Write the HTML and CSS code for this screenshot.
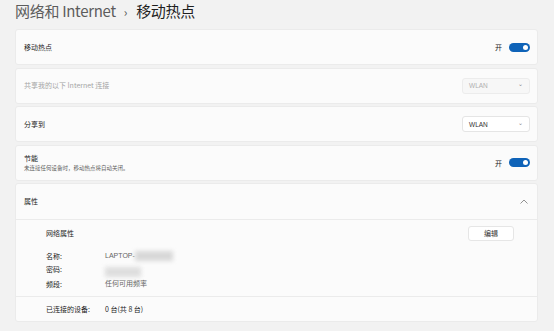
FILE: index.html
```html
<!DOCTYPE html>
<html lang="zh-cn">
<head>
    <meta charset="UTF-8">
    <meta name="viewport" content="width=device-width, initial-scale=1.0">
    <title>移动热点</title>
    <link rel="stylesheet" href="styles.css">
</head>
<body>
    <div class="page">
        <h1 class="title"><span class="crumb">网络和 Internet</span><span class="sep">›</span>移动热点</h1>

        <div class="card row">
            <span class="label">移动热点</span>
            <div class="toggle-wrap">
                <span class="state">开</span>
                <span class="toggle"></span>
            </div>
        </div>

        <div class="card row">
            <span class="label muted">共享我的以下 Internet 连接</span>
            <div class="select off">WLAN <span class="chev">⌄</span></div>
        </div>

        <div class="card row">
            <span class="label">分享到</span>
            <div class="select">WLAN <span class="chev">⌄</span></div>
        </div>

        <div class="card row">
            <div>
                <div class="label">节能</div>
                <div class="sub">未连接任何设备时，移动热点将自动关闭。</div>
            </div>
            <div class="toggle-wrap">
                <span class="state">开</span>
                <span class="toggle"></span>
            </div>
        </div>

        <div class="card props">
            <div class="props-head">
                <span class="label">属性</span>
                <svg class="up" width="8" height="5" viewBox="0 0 8 5"><path d="M0.5 4.5 L4 1 L7.5 4.5" fill="none" stroke="#777" stroke-width="0.8"/></svg>
            </div>
            <div class="props-body">
                <div class="props-top">
                    <span>网络属性</span>
                    <button class="edit">编辑</button>
                </div>
                <div class="kv">
                    <span class="k">名称:</span>
                    <span class="v">LAPTOP-<span class="blur wide"></span></span>
                    <span class="k">密码:</span>
                    <span class="v"><span class="blur short"></span></span>
                    <span class="k">频段:</span>
                    <span class="v">任何可用频率</span>
                </div>
            </div>
            <div class="props-foot">
                <span class="k2">已连接的设备:</span>
                <span>0 台(共 8 台)</span>
            </div>
        </div>
    </div>
</body>
</html>
```

FILE: styles.css
```css
body {
    margin: 0;
    background: #f2f2f2;
    font-family: "Noto Sans CJK SC", "Noto Sans", sans-serif;
    color: #1b1b1b;
}

.page {
    padding: 0 16px 0 15px;
}

.title {
    margin: 0;
    height: 29px;
    font-size: 15px;
    font-weight: 400;
    line-height: 22px;
    color: #1f1f1f;
    letter-spacing: -0.3px;
}

.title .crumb {
    color: #5c5c5c;
}

.title .sep {
    font-size: 12px;
    margin: 0 9px 0 8px;
    color: #555;
}

.card {
    background: #fbfbfb;
    border: 1px solid #ebebeb;
    border-radius: 3px;
    margin-bottom: 2.5px;
    box-sizing: border-box;
}

.row {
    display: flex;
    align-items: center;
    justify-content: space-between;
    padding: 0 7px 0 8px;
    height: 36px;
}

.label {
    font-size: 7px;
    line-height: 9px;
}

.label.muted {
    color: #a5a5a5;
}

.sub {
    margin-top: 2px;
    font-size: 5.5px;
    line-height: 7px;
    color: #5d5d5d;
}

.toggle-wrap {
    display: flex;
    align-items: center;
    gap: 7px;
}

.state {
    font-size: 7px;
}

.toggle {
    position: relative;
    width: 21px;
    height: 9px;
    border-radius: 5px;
    background: #0f63b8;
}

.toggle::after {
    content: "";
    position: absolute;
    right: 2px;
    top: 2px;
    width: 5px;
    height: 5px;
    border-radius: 50%;
    background: #fff;
}

.select {
    display: flex;
    justify-content: space-between;
    align-items: center;
    width: 68px;
    height: 16px;
    box-sizing: border-box;
    padding: 0 6px;
    font-family: "Liberation Sans", sans-serif;
    font-size: 6.5px;
    background: #fff;
    border: 1px solid #e5e5e5;
    border-radius: 3px;
    color: #333;
}

.select.off {
    background: #f7f7f7;
    border-color: #ececec;
    color: #b0b0b0;
}

.chev {
    font-size: 6px;
    color: #888;
    line-height: 6px;
    margin-top: -3px;
}

.props-head {
    display: flex;
    justify-content: space-between;
    align-items: center;
    height: 35px;
    padding: 0 9px 0 8px;
    border-bottom: 1px solid #ebebeb;
}

.props-body {
    padding: 5px 23px 6px 30px;
    font-size: 7px;
    border-bottom: 1px solid #ebebeb;
}

.props-top {
    display: flex;
    justify-content: space-between;
    align-items: center;
    height: 16px;
    margin-bottom: 9px;
}

.edit {
    width: 46px;
    height: 15px;
    font-family: inherit;
    font-size: 7px;
    background: #fff;
    border: 1px solid #e6e6e6;
    border-radius: 3px;
    color: #333;
    padding: 0;
}

.kv {
    display: grid;
    grid-template-columns: 59px 1fr;
    row-gap: 0.5px;
    line-height: 12.5px;
}

.v {
    color: #666;
    display: flex;
    align-items: center;
    font-family: "Liberation Sans", "Noto Sans CJK SC", sans-serif;
}

.blur {
    display: inline-block;
    height: 10px;
    background: #d8d8d8;
    filter: blur(2px);
}

.blur.wide {
    width: 38px;
}

.blur.short {
    width: 36px;
    margin-top: 4px;
    background: #dedede;
}

.props-foot {
    display: flex;
    align-items: center;
    height: 24px;
    padding-left: 30px;
    font-size: 7px;
}

.k2 {
    width: 59px;
}
```
